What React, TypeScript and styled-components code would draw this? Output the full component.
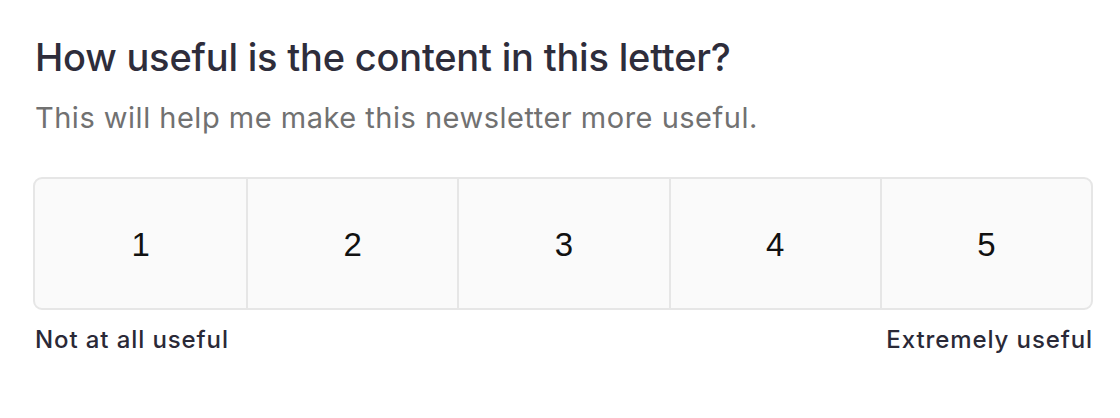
import styled, { createGlobalStyle } from "styled-components";

const GlobalStyle = createGlobalStyle`
  body {
    margin: 0;
    background: #ffffff;
    font-family: Inter, "Noto Sans", sans-serif;
  }
`;

const RATINGS = [1, 2, 3, 4, 5];

const App = () => {
  return (
    <>
      <GlobalStyle />
      <Card>
        <Title>How useful is the content in this letter?</Title>
        <Subtitle>This will help me make this newsletter more useful.</Subtitle>
        <Scale>
          {RATINGS.map((value) => (
            <ScaleButton key={value}>{value}</ScaleButton>
          ))}
        </Scale>
        <Legend>
          <LegendText>Not at all useful</LegendText>
          <LegendText>Extremely useful</LegendText>
        </Legend>
      </Card>
    </>
  );
};

export default App;

const Card = styled.div`
  padding: 34px 27px 0 33px;
  display: flex;
  flex-direction: column;
`;

const Title = styled.h2`
  margin: 0 0 0 2px;
  font-size: 38px;
  line-height: 46px;
  font-weight: 500;
  letter-spacing: -0.2px;
  color: #2e2d3b;
`;

const Subtitle = styled.p`
  margin: 20px 0 0 2px;
  font-size: 29px;
  line-height: 36px;
  font-weight: 400;
  letter-spacing: 0.5px;
  color: #717171;
`;

const Scale = styled.div`
  margin-top: 41px;
  display: grid;
  grid-template-columns: repeat(5, 1fr);
  height: 133px;
  box-sizing: border-box;
  border: 2px solid #e6e6e6;
  border-radius: 9px;
  background: #fafafa;
  overflow: hidden;
`;

const ScaleButton = styled.button`
  border: none;
  border-left: 2px solid #e6e6e6;
  background: transparent;
  font-family: "Liberation Sans", Arial, sans-serif;
  font-size: 33px;
  color: #111111;
  cursor: pointer;
  padding: 2px 0 0;

  &:first-child {
    border-left: none;
  }
`;

const Legend = styled.div`
  margin-top: 15px;
  display: flex;
  justify-content: space-between;
  padding: 0 0 0 2px;
`;

const LegendText = styled.span`
  font-size: 24px;
  line-height: 30px;
  font-weight: 500;
  letter-spacing: 0.9px;
  color: #2a2937;
`;
